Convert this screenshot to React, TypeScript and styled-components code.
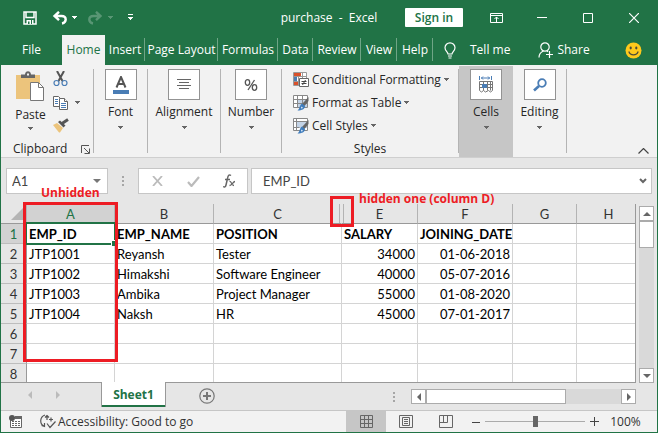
import React from "react";
import styled, { createGlobalStyle, css } from "styled-components";

const green = "#217346";
const red = "#ed1c24";
const ui = `"Open Sans", "Noto Sans", sans-serif`;
const sheetFont = `Lato, "Open Sans", sans-serif`;

const GlobalStyle = createGlobalStyle`
  *, *::before, *::after { box-sizing: border-box; }
  body { margin: 0; font: 12px/16px ${ui}; color: #262626; }
  button, input { font: inherit; color: inherit; margin: 0; }
  button { border: 0; padding: 0; background: none; white-space: nowrap; }
  svg { display: block; flex: none; }
`;

const Shell = styled.div`
  display: flex;
  flex-direction: column;
  height: 100vh;
  background: #e6e6e6;
  border: solid ${green};
  border-width: 0 1px 1px;
  overflow: hidden;
`;

/* Title bar */
const TitleBar = styled.header`
  display: grid;
  grid-template-columns: 1fr auto 1fr;
  align-items: center;
  height: 35px;
  background: ${green};
  color: #fff;
`;
const QuickAccess = styled.div`
  display: flex;
  align-items: center;
  padding-left: 21px;
`;
const QuickButton = styled.button<{ $w: number; $dim?: boolean }>`
  display: flex;
  align-items: center;
  width: ${(p) => p.$w}px;
  opacity: ${(p) => (p.$dim ? 0.25 : 1)};
`;
const Title = styled.h1`
  margin: 0;
  font-size: 12px;
  font-weight: 400;
  white-space: pre;
`;
const WindowTools = styled.div`
  display: flex;
  justify-content: flex-end;
  align-items: center;
`;
const SignIn = styled.button`
  width: 58px;
  height: 19px;
  margin-right: 10px;
  background: #fff;
  border-radius: 1px;
  color: ${green};
  font-weight: 600;
`;
const WindowButton = styled.button`
  display: grid;
  place-items: center;
  width: 46px;
  height: 32px;
`;

/* Ribbon tabs */
const Tabs = styled.nav`
  display: flex;
  flex: none;
  height: 30px;
  background: ${green};
  color: #fff;
`;
const Tab = styled.button<{ $w: number; $active?: boolean; $line?: boolean }>`
  position: relative;
  width: ${(p) => p.$w}px;
  ${(p) => p.$active && css`background: #f2f2f2; color: ${green}; `}
  ${(p) =>
    p.$line &&
    css`
      &::after {
        content: "";
        position: absolute;
        right: 0;
        top: 3px;
        bottom: 4px;
        width: 1px;
        background: #6fa586;
      }
    `}
`;
const TabAction = styled.button<{ $gap: number }>`
  display: flex;
  align-items: center;
  gap: ${(p) => p.$gap}px;
`;
const TabActions = styled.div`
  display: flex;
  flex: 1;
  justify-content: space-between;
  padding: 0 15px 0 11px;
`;
const ActionPair = styled.div`
  display: flex;
  gap: 28px;
`;

/* Ribbon */
const Ribbon = styled.section`
  display: flex;
  flex: none;
  height: 93px;
  background: #f2f2f2;
  border-bottom: 1px solid #cfcfcf;
`;
const Divider = styled.div`
  flex: none;
  width: 1px;
  margin: 4px 0;
  background: #b4b4b4;
`;
const Group = styled.div<{ $w: number }>`
  display: flex;
  flex-direction: column;
  justify-content: space-between;
  flex: none;
  width: ${(p) => p.$w}px;
`;
const GroupFooter = styled.div<{ $center?: boolean }>`
  display: flex;
  align-items: center;
  justify-content: ${(p) => (p.$center ? "center" : "space-between")};
  padding: ${(p) => (p.$center ? "0" : "0 3px 0 12px")};
  height: 16px;
`;
const ClipboardBody = styled.div`
  display: flex;
  padding: 6px 0 0 13px;
  gap: 6px;
`;
const PasteButton = styled.button`
  display: flex;
  flex-direction: column;
  align-items: center;
  gap: 4px;
  width: 33px;
`;
const SmallStack = styled.div`
  display: flex;
  flex-direction: column;
  gap: 7px;
`;
const SmallButton = styled.button`
  display: flex;
  align-items: center;
  gap: 6px;
  height: 16px;
`;
const StyleList = styled.div`
  display: flex;
  flex-direction: column;
  align-items: flex-start;
  padding: 3px 0 0 11px;
`;
const StyleButton = styled.button`
  display: flex;
  align-items: center;
  gap: 3px;
  height: 23px;
`;
const GroupButton = styled.button<{ $w: number; $hot?: boolean }>`
  display: flex;
  flex-direction: column;
  align-items: center;
  flex: none;
  width: ${(p) => p.$w}px;
  height: 91px;
  margin-top: 1px;
  padding-top: 3px;
  background: ${(p) => (p.$hot ? "#c6c6c6" : "transparent")};
`;
const IconBox = styled.span`
  display: grid;
  place-items: center;
  width: 32px;
  height: 31px;
  margin-bottom: 4px;
  background: #fff;
  border: 1px solid #939393;
`;
const GroupName = styled.span`
  margin-bottom: 6px;
`;
const Collapse = styled.button`
  margin: auto 8px 3px auto;
`;

/* Formula bar */
const FormulaBar = styled.section`
  display: flex;
  flex: none;
  padding: 10px 5px;
  font-family: ${sheetFont};
  font-size: 13px;
  color: #444;
`;
const Box = styled.div<{ $w?: number }>`
  display: flex;
  align-items: center;
  height: 26px;
  background: #fff;
  border: 1px solid #c6c6c6;
  ${(p) => (p.$w ? `flex: none; width: ${p.$w}px;` : "flex: 1; margin-left: 3px;")}
`;
const BoxInput = styled.input<{ $pad: number }>`
  flex: 1;
  min-width: 0;
  height: 24px;
  padding: 0 0 0 ${(p) => p.$pad}px;
  border: 0;
  outline: 0;
  background: transparent;
`;
const BoxButton = styled.button<{ $w: number }>`
  display: grid;
  place-items: center;
  width: ${(p) => p.$w}px;
  height: 24px;
`;
const Dots = styled.div<{ $w: number }>`
  display: grid;
  place-content: center;
  gap: 2px;
  width: ${(p) => p.$w}px;
  i {
    width: 2px;
    height: 2px;
    background: #a6a6a6;
  }
`;

/* Sheet */
const Sheet = styled.main`
  position: relative;
  display: flex;
  flex: 1;
  min-height: 0;
  padding-right: 3px;
`;
const GridPane = styled.div`
  flex: 1;
  min-width: 0;
  overflow: hidden;
  background: linear-gradient(#e6e6e6 20px, #fff 20px);
  border-right: 1px solid #999;
  border-bottom: 1px solid #999;
  margin-right: 3px;
`;
const Table = styled.table`
  width: calc(100% + 6px);
  table-layout: fixed;
  border-collapse: separate;
  border-spacing: 0;
  font: 13px/18px ${sheetFont};
  color: #000;
`;
const ColHead = styled.th<{ $on?: boolean; $plain?: boolean }>`
  position: relative;
  height: 20px;
  padding: 0;
  font-weight: 400;
  background: ${(p) => (p.$on ? "#d2d2d2" : "#e6e6e6")};
  color: ${(p) => (p.$on ? green : "#333")};
  border-right: 1px solid ${(p) => (p.$plain ? "transparent" : "#b3b3b3")};
  border-bottom: 1px solid #999;
`;
const HiddenSeam = styled.span`
  position: absolute;
  top: 0;
  bottom: 0;
  right: -3px;
  width: 5px;
  z-index: 1;
  border: solid #b3b3b3;
  border-width: 0 1px;
`;
const Corner = styled.th`
  height: 20px;
  padding: 0 3px 0 0;
  background: #e6e6e6;
  border-right: 1px solid #b3b3b3;
  border-bottom: 1px solid #999;
  svg {
    margin-left: auto;
  }
`;
const RowHead = styled.th<{ $on?: boolean }>`
  height: 20px;
  padding: 0;
  font-weight: 400;
  background: ${(p) => (p.$on ? "#d2d2d2" : "#e6e6e6")};
  color: ${(p) => (p.$on ? green : "#333")};
  border-right: 1px solid #999;
  border-bottom: 1px solid #bdbdbd;
`;
const Cell = styled.td<{ $right?: boolean; $bold?: boolean; $active?: boolean }>`
  height: 20px;
  padding: 0 2px;
  background: #fff;
  border-right: 1px solid #d4d4d4;
  border-bottom: 1px solid #d4d4d4;
  text-align: ${(p) => (p.$right ? "right" : "left")};
  font-weight: ${(p) => (p.$bold ? 700 : 400)};
  white-space: nowrap;
  ${(p) =>
    p.$active &&
    css`
      position: relative;
      z-index: 1;
      &::before {
        content: "";
        position: absolute;
        inset: -2px;
        border: 2px solid ${green};
      }
      &::after {
        content: "";
        position: absolute;
        right: -3px;
        bottom: -3px;
        width: 6px;
        height: 6px;
        background: ${green};
        border: solid #fff;
        border-width: 1px 0 0 1px;
      }
    `}
`;

/* Scroll bars */
const Scroll = styled.div<{ $row?: boolean }>`
  display: flex;
  flex: none;
  flex-direction: ${(p) => (p.$row ? "row" : "column")};
  ${(p) => (p.$row ? "width: 225px; height: 15px;" : "width: 15px; margin-top: 2px;")}
  background: #d9d9d9;
`;
const ScrollButton = styled.button`
  display: grid;
  place-items: center;
  flex: none;
  width: 15px;
  height: 15px;
  background: #fff;
  border: 1px solid #ababab;
`;
const Thumb = styled.div<{ $w: number; $h: number }>`
  width: ${(p) => p.$w}px;
  height: ${(p) => p.$h}px;
  background: #fff;
  border: 1px solid #ababab;
`;
const Track = styled.div`
  flex: 1;
`;

/* Call-outs laid over the sheet */
const Frame = styled.div<{ $x: number; $y: number; $w: number; $h: number }>`
  position: absolute;
  z-index: 2;
  left: ${(p) => p.$x}px;
  top: ${(p) => p.$y}px;
  width: ${(p) => p.$w}px;
  height: ${(p) => p.$h}px;
  border: 3px solid ${red};
  pointer-events: none;
`;
const Note = styled.span<{ $x: number; $y: number }>`
  position: absolute;
  z-index: 2;
  left: ${(p) => p.$x}px;
  top: ${(p) => p.$y}px;
  font-size: 12px;
  font-weight: 700;
  color: ${red};
  white-space: nowrap;
`;

/* Sheet tabs */
const TabStrip = styled.section`
  display: flex;
  align-items: flex-start;
  flex: none;
  height: 27px;
  padding-right: 21px;
`;
const SheetNav = styled.div`
  display: flex;
  align-items: center;
  gap: 20px;
  width: 100px;
  height: 24px;
  padding-left: 25px;
`;
const SheetTab = styled.button`
  position: relative;
  z-index: 1;
  width: 65px;
  height: 25px;
  margin-top: -1px;
  background: #fff;
  border: solid #999;
  border-width: 0 1px;
  box-shadow: inset 0 -2px ${green};
  color: ${green};
  font-weight: 700;
`;
const AddSheet = styled.button`
  margin: 5px auto 0 33px;
`;
const StripScroll = styled.div`
  display: flex;
  padding-top: 6px;
`;

/* Status bar */
const StatusBar = styled.footer`
  display: flex;
  align-items: center;
  flex: none;
  height: 22px;
  background: #f2f2f2;
  border-top: 1px solid #c6c6c6;
  color: #333;
`;
const StatusLeft = styled.div`
  display: flex;
  align-items: center;
  flex: 1;
  padding-left: 8px;
  gap: 17px;
`;
const Access = styled.button`
  display: flex;
  align-items: center;
  gap: 2px;
  font-weight: 500;
`;
const ViewButton = styled.button<{ $on?: boolean }>`
  display: grid;
  place-items: center;
  width: 40px;
  height: 21px;
  background: ${(p) => (p.$on ? "#c6c6c6" : "transparent")};
`;
const Step = styled.button`
  display: grid;
  place-items: center;
  width: 19px;
  height: 21px;
`;
const Zoom = styled.input`
  appearance: none;
  width: 100px;
  height: 11px;
  background: linear-gradient(#ababab, #ababab) center / 100% 1px no-repeat;
  &::-webkit-slider-thumb {
    appearance: none;
    width: 5px;
    height: 11px;
    background: #666;
  }
`;
const Percent = styled.button`
  width: 43px;
  margin-right: 10px;
`;

/* Icons */
const Caret = ({ fill = "#666" }: { fill?: string }) => (
  <svg width="5" height="3" viewBox="0 0 5 3" shapeRendering="crispEdges">
    <path d="M0 0h5v1H4v1H3v1H2V2H1V1H0z" fill={fill} />
  </svg>
);

const Arrow = ({ turn, fill = "#666", size = 8 }: { turn: number; fill?: string; size?: number }) => (
  <svg width={size} height={size} viewBox="0 0 8 8">
    <path d="M0 6l4-4 4 4z" fill={fill} transform={`rotate(${turn} 4 4)`} />
  </svg>
);

const SaveIcon = () => (
  <svg width="16" height="16" viewBox="0 0 16 16" fill="none" stroke="#fff" strokeWidth="1.5">
    <path d="M2 2h12v12H2zM4 2v5.5h8V2" />
    <path d="M4.500 10h7v4h-7z" fill="#fff" stroke="none" />
    <path d="M6 11.500h1.500V14H6zM9 10h1v4H9z" fill={green} stroke="none" />
  </svg>
);

const UndoIcon = ({ flip }: { flip?: boolean }) => (
  <svg width="16" height="14" viewBox="0 0 16 14" fill="none" stroke="#fff" strokeWidth="2.400">
    <g transform={flip ? "translate(16 0) scale(-1 1)" : undefined}>
      <path d="M7 .8L2.500 5 7 9.200M3 5h6.500c5.500 0 5.500 6.500.5 7.500" />
    </g>
  </svg>
);

const CustomizeIcon = () => (
  <svg width="5" height="7" viewBox="0 0 5 7" shapeRendering="crispEdges" fill="#fff">
    <path d="M0 0h5v1H0zM0 3h5v1H4v1H3v1H2V5H1V4H0z" />
  </svg>
);

const BulbIcon = () => (
  <svg width="12" height="17" viewBox="0 0 12 17" fill="none" stroke="#fff" strokeWidth="1.200">
    <path d="M4 12c0-2-3-3-3-6.200a5 5 0 0 1 10 0C11 9 8 10 8 12zM4 14h4M4.500 16h3" />
  </svg>
);

const ShareIcon = () => (
  <svg width="15" height="16" viewBox="0 0 15 16" fill="none" stroke="#fff" strokeWidth="1.200">
    <circle cx="7" cy="5" r="4.200" />
    <path d="M1 15.500c0-4 2-5.500 4.500-6.500M9 9l1 .8M8 12.500h7M11.500 9v7" />
  </svg>
);

const Smiley = () => (
  <svg width="17" height="17" viewBox="0 0 17 17">
    <circle cx="8.500" cy="8.500" r="8" fill="#ffc91c" />
    <ellipse cx="5.700" cy="6" rx="1.100" ry="1.400" fill="#4a4a3a" />
    <ellipse cx="11.300" cy="6" rx="1.100" ry="1.400" fill="#4a4a3a" />
    <path d="M3.800 9.500c1.500 4.500 7.900 4.500 9.400 0" fill="none" stroke="#4a4a3a" strokeWidth="1.200" />
  </svg>
);

const PasteIcon = () => (
  <svg width="29" height="32" viewBox="0 0 29 32">
    <path d="M0 4h24v24H0z" fill="#ecc47c" />
    <path d="M5 7V3.500h4c0-4.500 6-4.500 6 0h4V7z" fill="#666" />
    <path d="M11 2.500h2v2h-2z" fill="#f2f2f2" />
    <path d="M14.500 11.500h8l5 5v13h-13z" fill="#fff" stroke="#777" />
    <path d="M22.500 11.500v5h5" fill="none" stroke="#777" />
  </svg>
);

const CutIcon = () => (
  <svg width="16" height="16" viewBox="0 0 16 16" fill="none">
    <path d="M4 0l5.500 10M11 0L5.500 10" stroke="#555" strokeWidth="2" />
    <circle cx="3.500" cy="12" r="2.500" stroke="#4a7db5" strokeWidth="1.200" />
    <circle cx="11.500" cy="12" r="2.500" stroke="#4a7db5" strokeWidth="1.200" />
  </svg>
);

const CopyIcon = () => (
  <svg width="16" height="15" viewBox="0 0 16 15" fill="#fff" stroke="#666">
    <path d="M.5 1.500h5l2 2v8h-7z" />
    <path d="M6.500 3.500h5l3 3v8h-8z" />
    <path d="M11.500 3.500v3h3" />
    <path d="M2 4.500h3M2 6.500h3M2 8.500h3M8 8.500h5M8 10.500h5M8 12.500h5" stroke="#4a7db5" />
  </svg>
);

const BrushIcon = () => (
  <svg width="17" height="15" viewBox="0 0 17 15">
    <path d="M0 7l4-2 6 5-3 4.500H6z" fill="#ecc47c" />
    <path d="M5 4l2-1.500 5.500 5L10.500 9.500z" fill="#555" />
    <path d="M9 5.500L15 1.500" stroke="#555" strokeWidth="3" />
  </svg>
);

const LauncherIcon = () => (
  <svg width="9" height="9" viewBox="0 0 9 9" fill="none" stroke="#555">
    <path d="M.5 8V.5H8M3 3l5 5M8.500 3.500v5h-5" />
  </svg>
);

const FontIcon = () => (
  <svg width="16" height="18" viewBox="0 0 16 18">
    <path d="M3.500 11.500L8 1l4.500 10.500M5.500 8h5" fill="none" stroke="#555" strokeWidth="2" />
    <path d="M0 14h16v4H0z" fill="#4a7db5" />
  </svg>
);

const AlignIcon = () => (
  <svg width="14" height="11" viewBox="0 0 14 11" stroke="#666">
    <path d="M0 .5h14M2 3.500h10M0 6.500h14M2 9.500h10" />
  </svg>
);

const PercentIcon = () => (
  <svg width="14" height="14" viewBox="0 0 14 14" fill="none" stroke="#555" strokeWidth="1.300">
    <ellipse cx="3.500" cy="4.500" rx="2.200" ry="2.800" />
    <ellipse cx="10.500" cy="9.500" rx="2.200" ry="2.800" />
    <path d="M10.500 2L4 12" />
  </svg>
);

const CellsIcon = () => (
  <svg width="16" height="17" viewBox="0 0 16 17" fill="none">
    <path d="M1.500 0v4M13.500 0v4M3 2h9M5 .5L3.500 2 5 3.500M10 .5L11.500 2 10 3.500" stroke="#4a7db5" />
    <path d="M1.500 5.500h13v9l-2 1.500-2-1.500-3 1.500-2-1.500-2 1.500-2-1.500zM1.500 8.500h13M1.500 11.500h13M5.500 5.500v9M9.500 5.500v9M12.500 5.500v9" stroke="#777" />
    <path d="M4 8h5v4H4z" fill="#4a7db5" />
  </svg>
);

const SearchIcon = () => (
  <svg width="14" height="14" viewBox="0 0 14 14" fill="none" stroke="#4a7db5">
    <circle cx="9" cy="5" r="3.800" strokeWidth="1.800" />
    <path d="M6 8l-5 4.500" strokeWidth="2.600" />
  </svg>
);

const ConditionalIcon = () => (
  <svg width="16" height="17" viewBox="0 0 16 17">
    <path d="M.5 1.500h13v13H.5zM.5 5.500h13M.5 10.500h13M5.500 1.500v13M9.500 1.500v13" fill="#fff" stroke="#999" />
    <path d="M1 2h7v3H1zM1 11h4v3H1z" fill="#d9512c" />
    <path d="M1 6h3v4H1z" fill="#4a7db5" />
    <path d="M6.500 7.500h9v8h-9z" fill="#fff" stroke="#666" />
    <path d="M8.500 10.500h5M8.500 12.500h5M12.500 9l-3 5" stroke="#444" />
  </svg>
);

const TableBrushIcon = ({ rows }: { rows?: boolean }) => (
  <svg width="16" height="17" viewBox="0 0 16 17">
    <path d="M.5 1.500h14v12H.5z" fill="#fff" stroke="#888" />
    <path d={rows ? "M5 6h9v7H5z" : "M3 4h11v7H3z"} fill="#c3d3e6" />
    <path
      d={rows ? "M.5 5.500h14M.5 9.500h14M4.500 1.500v12M9.500 1.500v12" : "M.5 4.500h14M3.500 1.500v12M.5 10.500h6"}
      fill="none"
      stroke="#888"
    />
    <path d="M15.500 3v4l-4 5-2.500-2z" fill="#666" />
    <path d="M9 9.500l3 2.500c0 3-3 4.500-7.500 4.500 2.500-1.500 1.500-5 4.500-7z" fill="#3f7dbd" />
    <path d="M8.500 12.500l1.500 1.500-2 .5z" fill="#fff" />
  </svg>
);

const AddIcon = () => (
  <svg width="16" height="16" viewBox="0 0 16 16" fill="none" stroke="#777">
    <circle cx="8" cy="8" r="7.200" strokeWidth="1.200" />
    <path d="M8 4v8M4 8h8" strokeWidth="2" />
  </svg>
);

const MacroIcon = () => (
  <svg width="14" height="13" viewBox="0 0 14 13">
    <path d="M1.500 2.500h11v10h-11z" fill="#fff" stroke="#666" />
    <path d="M6 1h7v3H6z" fill="#666" />
    <path d="M3 6.500h2M6 6.500h2M9 6.500h2M3 8.500h2M6 8.500h2M9 8.500h2M3 10.500h2M6 10.500h2M9 10.500h2" stroke="#666" />
    <circle cx="3" cy="3" r="3" fill="#555" />
  </svg>
);

const AccessIcon = () => (
  <svg width="16" height="15" viewBox="0 0 16 15" fill="none" stroke="#555" strokeWidth="1.200">
    <path d="M5 1C-.5 3-.5 10 4 12M1.500 11.500L4.500 12.500V9M7 1v5M5 3.500L7 1.500l2 2M9 5.500h4M11 3.500v4M7 9.500l3 4 5.500-6" />
  </svg>
);

const tabs: [string, number][] = [
  ["Insert", 40],
  ["Page Layout", 73],
  ["Formulas", 60],
  ["Data", 35],
  ["Review", 48],
  ["View", 36],
  ["Help", 36],
];

const rows = [
  ["EMP_ID", "EMP_NAME", "POSITION", "SALARY", "JOINING_DATE"],
  ["JTP1001", "Reyansh", "Tester", "34000", "01-06-2018"],
  ["JTP1002", "Himakshi", "Software Engineer", "40000", "05-07-2016"],
  ["JTP1003", "Ambika", "Project Manager", "55000", "01-08-2020"],
  ["JTP1004", "Naksh", "HR", "45000", "07-01-2017"],
  [],
  [],
  [],
];

const DotColumn = ({ w }: { w: number }) => (
  <Dots $w={w}>
    <i />
    <i />
    <i />
  </Dots>
);

export default function App() {
  return (
    <Shell>
      <GlobalStyle />
      <TitleBar>
        <QuickAccess>
          <QuickButton $w={30} aria-label="Save"><SaveIcon /></QuickButton>
          <QuickButton $w={20} aria-label="Undo"><UndoIcon /></QuickButton>
          <QuickButton $w={15} aria-label="Undo history"><Caret fill="#fff" /></QuickButton>
          <QuickButton $w={21} $dim aria-label="Redo"><UndoIcon flip /></QuickButton>
          <QuickButton $w={20} $dim aria-label="Redo history"><Caret fill="#fff" /></QuickButton>
          <QuickButton $w={10} aria-label="Customize toolbar"><CustomizeIcon /></QuickButton>
        </QuickAccess>
        <Title>{"purchase  -  Excel"}</Title>
        <WindowTools>
          <SignIn>Sign in</SignIn>
          <WindowButton aria-label="Ribbon display options">
            <svg width="13" height="10" viewBox="0 0 13 10" fill="none" stroke="#fff">
              <path d="M.5 .5h12v9H.5zM.5 2.500h12M6.500 9V4M4.500 6l2-2 2 2" />
            </svg>
          </WindowButton>
          <WindowButton aria-label="Minimize">
            <svg width="10" height="1" viewBox="0 0 10 1"><path d="M0 0h10v1H0z" fill="#fff" /></svg>
          </WindowButton>
          <WindowButton aria-label="Maximize">
            <svg width="10" height="10" viewBox="0 0 10 10"><path d="M.5.5h9v9h-9z" fill="none" stroke="#fff" /></svg>
          </WindowButton>
          <WindowButton aria-label="Close">
            <svg width="10" height="10" viewBox="0 0 10 10"><path d="M0 0l10 10M10 0L0 10" stroke="#fff" strokeWidth="1.200" /></svg>
          </WindowButton>
        </WindowTools>
      </TitleBar>

      <Tabs>
        <Tab $w={61}>File</Tab>
        <Tab $w={43} $active>Home</Tab>
        {tabs.map(([name, w]) => (
          <Tab key={name} $w={w} $line>{name}</Tab>
        ))}
        <TabActions>
          <ActionPair>
            <TabAction $gap={14}><BulbIcon />Tell me</TabAction>
            <TabAction $gap={4}><ShareIcon />Share</TabAction>
          </ActionPair>
          <TabAction $gap={0} aria-label="Feedback"><Smiley /></TabAction>
        </TabActions>
      </Tabs>

      <Ribbon>
        <Group $w={92}>
          <ClipboardBody>
            <PasteButton><PasteIcon />Paste<Caret /></PasteButton>
            <SmallStack>
              <SmallButton aria-label="Cut"><CutIcon /></SmallButton>
              <SmallButton aria-label="Copy"><CopyIcon /><Caret /></SmallButton>
              <SmallButton aria-label="Format Painter"><BrushIcon /></SmallButton>
            </SmallStack>
          </ClipboardBody>
          <GroupFooter>
            Clipboard
            <button aria-label="Clipboard settings"><LauncherIcon /></button>
          </GroupFooter>
        </Group>
        <Divider />
        <GroupButton $w={53}><IconBox><FontIcon /></IconBox><GroupName>Font</GroupName><Caret /></GroupButton>
        <Divider />
        <GroupButton $w={72}><IconBox><AlignIcon /></IconBox><GroupName>Alignment</GroupName><Caret /></GroupButton>
        <Divider />
        <GroupButton $w={60}><IconBox><PercentIcon /></IconBox><GroupName>Number</GroupName><Caret /></GroupButton>
        <Divider />
        <Group $w={176}>
          <StyleList>
            <StyleButton><ConditionalIcon />Conditional Formatting<Caret /></StyleButton>
            <StyleButton><TableBrushIcon rows />Format as Table<Caret /></StyleButton>
            <StyleButton><TableBrushIcon />Cell Styles<Caret /></StyleButton>
          </StyleList>
          <GroupFooter $center>Styles</GroupFooter>
        </Group>
        <Divider />
        <GroupButton $w={54} $hot><IconBox><CellsIcon /></IconBox><GroupName>Cells</GroupName><Caret /></GroupButton>
        <GroupButton $w={53}><IconBox><SearchIcon /></IconBox><GroupName>Editing</GroupName><Caret /></GroupButton>
        <Divider />
        <Collapse aria-label="Collapse ribbon">
          <svg width="11" height="6" viewBox="0 0 11 6" fill="none" stroke="#444" strokeWidth="1.200"><path d="M.5 5.500l5-5 5 5" /></svg>
        </Collapse>
      </Ribbon>

      <FormulaBar>
        <Box $w={102}>
          <BoxInput $pad={5} aria-label="Name box" defaultValue="A1" />
          <BoxButton $w={20} aria-label="Names">
            <svg width="8" height="4" viewBox="0 0 8 4"><path d="M0 0h8L4 4z" fill="#777" /></svg>
          </BoxButton>
        </Box>
        <DotColumn w={30} />
        <Box $w={110}>
          <BoxButton $w={36} aria-label="Cancel">
            <svg width="11" height="10" viewBox="0 0 11 10"><path d="M1 0l9 10M10 0L1 10" stroke="#bbb" strokeWidth="1.800" /></svg>
          </BoxButton>
          <BoxButton $w={36} aria-label="Enter">
            <svg width="13" height="11" viewBox="0 0 13 11"><path d="M1 6l3.500 4L12 1" fill="none" stroke="#bbb" strokeWidth="2.200" /></svg>
          </BoxButton>
          <BoxButton $w={36} aria-label="Insert function">
            <svg width="13" height="14" viewBox="0 0 13 14" fill="none" stroke="#666">
              <path d="M8 1.500c-2-1.500-3 0-3.500 3L3 11c-.4 2-1.500 2.500-3 1.500M2 5.500h5" strokeWidth="1.500" />
              <path d="M6.500 7.500c2-.5 2 4 4.500 4M12 7.500c-2 0-3 4-5.500 4" strokeWidth="1.300" />
            </svg>
          </BoxButton>
        </Box>
        <Box>
          <BoxInput $pad={11} aria-label="Formula" defaultValue="EMP_ID" />
          <BoxButton $w={16} aria-label="Expand formula bar">
            <svg width="8" height="6" viewBox="0 0 8 6"><path d="M1 1l3 3 3-3" fill="none" stroke="#666" strokeWidth="2" /></svg>
          </BoxButton>
        </Box>
      </FormulaBar>

      <Sheet>
        <GridPane>
          <Table>
            <colgroup>
              <col width="26" />
              <col width="88" />
              <col width="99" />
              <col width="128" />
              <col width="76" />
              <col width="95" />
              <col width="64" />
              <col />
            </colgroup>
            <thead>
              <tr>
                <Corner aria-label="Select all">
                  <svg width="12" height="12" viewBox="0 0 12 12"><path d="M12 0v12H0z" fill="#b4b4b4" /></svg>
                </Corner>
                <ColHead $on>A</ColHead>
                <ColHead>B</ColHead>
                <ColHead $plain>C<HiddenSeam /></ColHead>
                <ColHead>E</ColHead>
                <ColHead>F</ColHead>
                <ColHead>G</ColHead>
                <ColHead $plain>H</ColHead>
              </tr>
            </thead>
            <tbody>
              {rows.map((row, r) => (
                <tr key={r}>
                  <RowHead $on={r === 0}>{r + 1}</RowHead>
                  {[0, 1, 2, 3, 4, 5, 6].map((c) => (
                    <Cell key={c} $bold={r === 0} $right={r > 0 && c > 2} $active={r === 0 && c === 0}>
                      {row[c]}
                    </Cell>
                  ))}
                </tr>
              ))}
            </tbody>
          </Table>
        </GridPane>
        <Scroll>
          <ScrollButton aria-label="Scroll up"><Arrow turn={0} /></ScrollButton>
          <Thumb $w={15} $h={27} />
          <Track />
          <ScrollButton aria-label="Scroll down"><Arrow turn={180} /></ScrollButton>
        </Scroll>
        <Frame $x={22} $y={-2} $w={95} $h={160} />
        <Frame $x={329} $y={-8} $w={24} $h={31} />
        <Note $x={40} $y={-19}>Unhidden</Note>
        <Note $x={358} $y={-13}>hidden one (column D)</Note>
      </Sheet>

      <TabStrip>
        <SheetNav>
          <button aria-label="Previous sheet"><Arrow turn={270} fill="#bbb" /></button>
          <button aria-label="Next sheet"><Arrow turn={90} fill="#bbb" /></button>
        </SheetNav>
        <SheetTab>Sheet1</SheetTab>
        <AddSheet aria-label="New sheet"><AddIcon /></AddSheet>
        <StripScroll>
          <DotColumn w={34} />
          <Scroll $row>
            <ScrollButton aria-label="Scroll left"><Arrow turn={270} /></ScrollButton>
            <Thumb $w={140} $h={15} />
            <Track />
            <ScrollButton aria-label="Scroll right"><Arrow turn={90} /></ScrollButton>
          </Scroll>
        </StripScroll>
      </TabStrip>

      <StatusBar>
        <StatusLeft>
          <button aria-label="Record macro"><MacroIcon /></button>
          <Access><AccessIcon />Accessibility: Good to go</Access>
        </StatusLeft>
        <ViewButton $on aria-label="Normal view">
          <svg width="13" height="13" viewBox="0 0 13 13" fill="none" stroke="#666"><path d="M.5.5h12v12H.5zM4.500 0v13M8.500 0v13M0 4.500h13M0 8.500h13" /></svg>
        </ViewButton>
        <ViewButton aria-label="Page layout view">
          <svg width="14" height="13" viewBox="0 0 14 13" fill="none" stroke="#666"><path d="M.5.5h13v12H.5zM3.500 2.500h7v8h-7zM5 4.500h4M5 6.500h4M5 8.500h4" /></svg>
        </ViewButton>
        <ViewButton aria-label="Page break preview">
          <svg width="14" height="13" viewBox="0 0 14 13" fill="none" stroke="#666"><path d="M.5.5h13v12H.5zM4.500 0v7M8.500 0v7.500H1" /></svg>
        </ViewButton>
        <Step aria-label="Zoom out">
          <svg width="8" height="8" viewBox="0 0 8 8"><path d="M0 4.500h8" stroke="#444" /></svg>
        </Step>
        <Zoom type="range" min={0} max={100} defaultValue={51} aria-label="Zoom" />
        <Step aria-label="Zoom in">
          <svg width="9" height="9" viewBox="0 0 9 9"><path d="M0 4.500h9M4.500 0v9" stroke="#444" /></svg>
        </Step>
        <Percent>100%</Percent>
      </StatusBar>
    </Shell>
  );
}
